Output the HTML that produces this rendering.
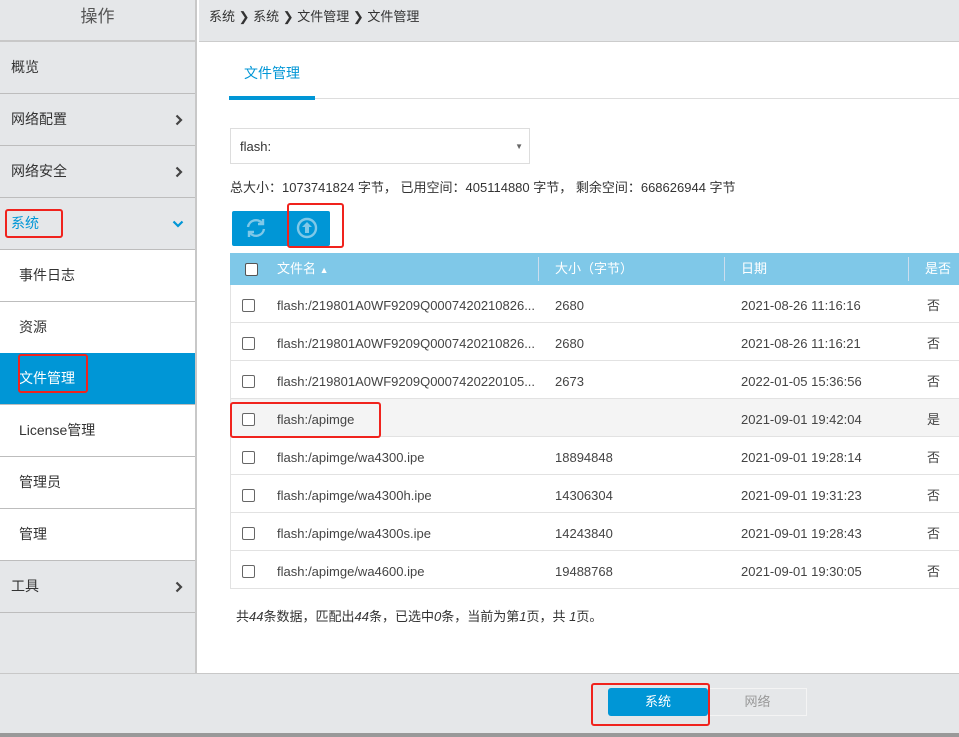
<!DOCTYPE html>
<html><head><meta charset="utf-8"><style>
*{box-sizing:border-box;margin:0;padding:0}
body{width:959px;height:737px;overflow:hidden;font-family:"Liberation Sans","Noto Sans CJK SC",sans-serif;font-size:13px;color:#333;background:#fff;position:relative}
.abs{position:absolute}
#side{left:0;top:0;width:197px;height:673px;background:#e5e7e9;border-right:2px solid #c8c8c8}
.si{position:absolute;left:0;width:195px;height:52px;border-bottom:1px solid #bdbdbd;line-height:51px;padding-left:11px;font-size:14px;color:#333}
.sub{background:#fff;padding-left:19px}
.chev{position:absolute;right:12px;top:20px}
.red{position:absolute;border:2px solid #f0231d;border-radius:3px}
.row{position:absolute;left:230px;width:729px;height:38px;border-bottom:1px solid #e2e2e2;border-left:1px solid #e2e2e2;line-height:42px;font-size:13px;color:#444}
.row span{position:absolute}
.cb{position:absolute;left:11px;top:14px;width:13px;height:13px;border:1px solid #666;border-radius:2px;background:#fff}
</style></head><body>
<div id="side" class="abs">
<div class="abs" style="left:0;top:0;width:195px;height:42px;border-bottom:2px solid #c8c8c8;text-align:center;line-height:34px;font-size:17px;color:#555">操作</div>
<div class="si" style="top:42px">概览</div>
<div class="si" style="top:94px">网络配置<svg class="chev" width="8" height="12" viewBox="0 0 8 12"><path d="M1.5 1.5l4.5 4.5-4.5 4.5" fill="none" stroke="#444" stroke-width="2.2"/></svg></div>
<div class="si" style="top:146px">网络安全<svg class="chev" width="8" height="12" viewBox="0 0 8 12"><path d="M1.5 1.5l4.5 4.5-4.5 4.5" fill="none" stroke="#444" stroke-width="2.2"/></svg></div>
<div class="si" style="top:198px;color:#0096d6">系统<svg class="chev" style="top:22px;right:11px" width="12" height="8" viewBox="0 0 12 8"><path d="M1.5 1.5l4.5 4.5 4.5-4.5" fill="none" stroke="#0096d6" stroke-width="2.2"/></svg></div>
<div class="si sub" style="top:250px">事件日志</div>
<div class="si sub" style="top:302px">资源</div>
<div class="si sub" style="top:353px;background:#0096d6;color:#fff">文件管理</div>
<div class="si sub" style="top:405px">License管理</div>
<div class="si sub" style="top:457px">管理员</div>
<div class="si sub" style="top:509px">管理</div>
<div class="si" style="top:561px">工具<svg class="chev" width="8" height="12" viewBox="0 0 8 12"><path d="M1.5 1.5l4.5 4.5-4.5 4.5" fill="none" stroke="#444" stroke-width="2.2"/></svg></div>
</div>
<div class="red" style="left:5px;top:209px;width:58px;height:29px"></div>
<div class="red" style="left:18px;top:354px;width:70px;height:39px"></div>
<div class="abs" style="left:199px;top:0;width:760px;height:42px;background:#e5e7e9;border-bottom:1px solid #ccc;line-height:34px;padding-left:10px;font-size:13px;color:#333">系统 ❯ 系统 ❯ 文件管理 ❯ 文件管理</div>
<div class="abs" style="left:244px;top:63px;font-size:14px;color:#0096d6">文件管理</div>
<div class="abs" style="left:229px;top:98px;width:730px;height:1px;background:#ddd"></div>
<div class="abs" style="left:229px;top:96px;width:86px;height:4px;background:#0096d6"></div>
<div class="abs" style="left:230px;top:128px;width:300px;height:36px;border:1px solid #ddd;line-height:36px;padding-left:9px;color:#333">flash:<span style="position:absolute;right:6px;font-size:8px;color:#666">▼</span></div>
<div class="abs" style="left:230px;top:177px;color:#333">总大小：1073741824 字节， 已用空间：405114880 字节， 剩余空间：668626944 字节</div>
<div class="abs" style="left:232px;top:211px;width:98px;height:35px;background:#0096d6;border-radius:2px"></div>
<svg class="abs" style="left:244px;top:216px" width="24" height="24" viewBox="0 0 24 24" fill="none" stroke="#7fc8e8" stroke-width="2.4"><path d="M4 11a8 8 0 0 1 14-4"/><path d="M20 13a8 8 0 0 1-14 4"/><path d="M19 3v5h-5" fill="none"/><path d="M5 21v-5h5"/></svg>
<svg class="abs" style="left:295px;top:216px" width="24" height="24" viewBox="0 0 24 24"><circle cx="12" cy="12" r="9" fill="none" stroke="#7fc8e8" stroke-width="2.4"/><path d="M12 6l5 5h-3v6h-4v-6H7z" fill="#7fc8e8"/></svg>
<div class="red" style="left:287px;top:203px;width:57px;height:45px"></div>
<div class="abs" style="left:230px;top:253px;width:729px;height:32px;background:#7fc8e8;color:#fff;line-height:31px;font-size:13px">
<span class="cb" style="top:10px;left:15px;border-color:#555"></span>
<span class="abs" style="left:47px">文件名 <span style="font-size:9px">▲</span></span>
<span class="abs" style="left:308px;top:4px;width:1px;height:24px;background:#cde"></span>
<span class="abs" style="left:325px">大小（字节）</span>
<span class="abs" style="left:494px;top:4px;width:1px;height:24px;background:#cde"></span>
<span class="abs" style="left:511px">日期</span>
<span class="abs" style="left:678px;top:4px;width:1px;height:24px;background:#cde"></span>
<span class="abs" style="left:695px">是否为</span>
</div>
<div class="row" style="top:285px"><i class="cb"></i><span style="left:46px">flash:/219801A0WF9209Q0007420210826...</span><span style="left:324px">2680</span><span style="left:510px">2021-08-26 11:16:16</span><span style="left:696px">否</span></div>
<div class="row" style="top:323px"><i class="cb"></i><span style="left:46px">flash:/219801A0WF9209Q0007420210826...</span><span style="left:324px">2680</span><span style="left:510px">2021-08-26 11:16:21</span><span style="left:696px">否</span></div>
<div class="row" style="top:361px"><i class="cb"></i><span style="left:46px">flash:/219801A0WF9209Q0007420220105...</span><span style="left:324px">2673</span><span style="left:510px">2022-01-05 15:36:56</span><span style="left:696px">否</span></div>
<div class="row" style="top:399px;background:#f4f4f4"><i class="cb"></i><span style="left:46px">flash:/apimge</span><span style="left:510px">2021-09-01 19:42:04</span><span style="left:696px">是</span></div>
<div class="row" style="top:437px"><i class="cb"></i><span style="left:46px">flash:/apimge/wa4300.ipe</span><span style="left:324px">18894848</span><span style="left:510px">2021-09-01 19:28:14</span><span style="left:696px">否</span></div>
<div class="row" style="top:475px"><i class="cb"></i><span style="left:46px">flash:/apimge/wa4300h.ipe</span><span style="left:324px">14306304</span><span style="left:510px">2021-09-01 19:31:23</span><span style="left:696px">否</span></div>
<div class="row" style="top:513px"><i class="cb"></i><span style="left:46px">flash:/apimge/wa4300s.ipe</span><span style="left:324px">14243840</span><span style="left:510px">2021-09-01 19:28:43</span><span style="left:696px">否</span></div>
<div class="row" style="top:551px"><i class="cb"></i><span style="left:46px">flash:/apimge/wa4600.ipe</span><span style="left:324px">19488768</span><span style="left:510px">2021-09-01 19:30:05</span><span style="left:696px">否</span></div>
<div class="red" style="left:230px;top:402px;width:151px;height:36px"></div>
<div class="abs" style="left:236px;top:606px;color:#333">共<i>44</i>条数据，匹配出<i>44</i>条，已选中<i>0</i>条，当前为第<i>1</i>页，共 <i>1</i>页。</div>
<div class="abs" style="left:0;top:673px;width:959px;height:60px;background:#e5e7e9;border-top:1px solid #c8c8c8"></div>
<div class="abs" style="left:0;top:733px;width:959px;height:4px;background:#999"></div>
<div class="abs" style="left:608px;top:688px;width:100px;height:28px;background:#0096d6;border-radius:3px;color:#fff;text-align:center;line-height:28px">系统</div>
<div class="abs" style="left:708px;top:688px;width:99px;height:28px;border:1px solid #f4f4f4;color:#999;text-align:center;line-height:26px">网络</div>
<div class="red" style="left:591px;top:683px;width:119px;height:43px"></div>
</body></html>
